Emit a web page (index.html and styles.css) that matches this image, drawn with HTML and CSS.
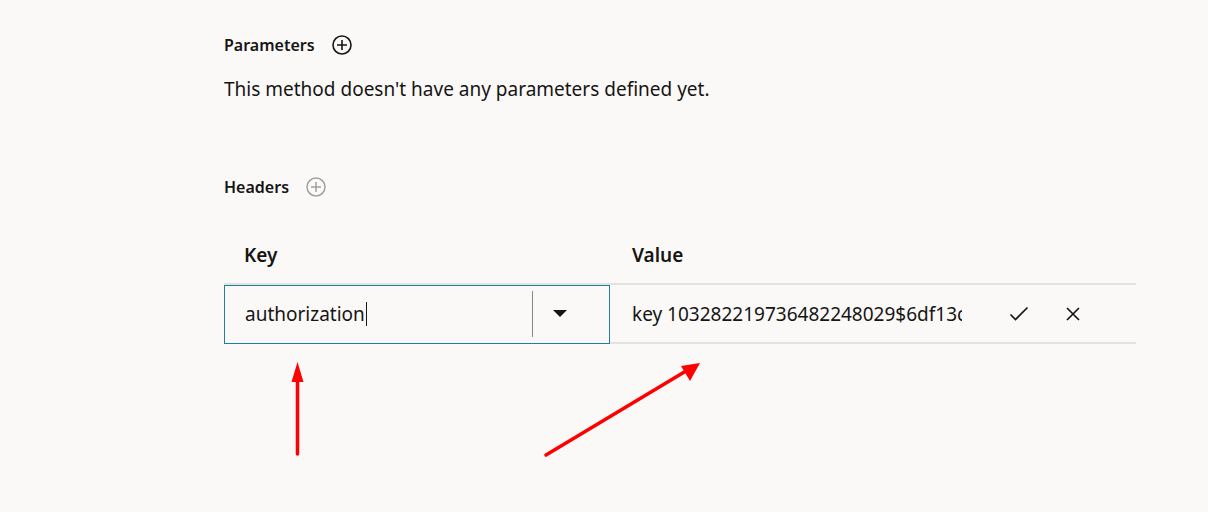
FILE: index.html
```html
<!DOCTYPE html>
<html lang="en">
<head>
<meta charset="utf-8">
<link rel="stylesheet" href="styles.css">
<title>Method</title>
</head>
<body>
<main class="page">
  <section class="group params">
    <div class="group-title">
      <span>Parameters</span>
      <svg class="add-icon" viewBox="0 0 20 20" width="20" height="20"><circle cx="10" cy="10" r="9" fill="none" stroke="#161513" stroke-width="1.6"/><path d="M10 5v10M5 10h10" stroke="#161513" stroke-width="1.6"/></svg>
    </div>
    <p class="desc">This method doesn't have any parameters defined yet.</p>
  </section>

  <section class="group headers">
    <div class="group-title">
      <span>Headers</span>
      <svg class="add-icon" viewBox="0 0 20 20" width="20" height="20"><circle cx="10" cy="10" r="9" fill="none" stroke="#a3a09c" stroke-width="1.5"/><path d="M10 5v10M5 10h10" stroke="#a3a09c" stroke-width="1.5"/></svg>
    </div>

    <div class="table">
      <div class="th th-key">Key</div>
      <div class="th th-value">Value</div>
      <div class="td td-key">
        <div class="combo">
          <span class="combo-text">authorization<span class="caret"></span></span>
          <span class="combo-sep"></span>
          <span class="combo-btn"><svg viewBox="0 0 14 8" width="14" height="8"><path d="M0 0h14L7 7z" fill="#161513"/></svg></span>
        </div>
      </div>
      <div class="td td-value">
        <span class="value-text">key 103282219736482248029$6df13c5e</span>
        <div class="actions">
          <svg viewBox="0 0 20 16" width="20" height="16"><path d="M1.5 8.5l5 5L18.5 1.5" fill="none" stroke="#161513" stroke-width="1.7"/></svg>
          <svg viewBox="0 0 14 14" width="14" height="14"><path d="M1 1l12 12M13 1L1 13" fill="none" stroke="#161513" stroke-width="1.7"/></svg>
        </div>
      </div>
    </div>
  </section>

  <svg class="annot" width="1208" height="512" viewBox="0 0 1208 512">
    <line x1="297.5" y1="454" x2="297.5" y2="378" stroke="#ff0000" stroke-width="3.5" stroke-linecap="round"/>
    <path d="M297.5 362L291.5 382H303.5Z" fill="#ff0000"/>
    <line x1="546" y1="455" x2="686" y2="371" stroke="#ff0000" stroke-width="3.5" stroke-linecap="round"/>
    <path d="M700 363L681 366L690 381Z" fill="#ff0000"/>
  </svg>
</main>
</body>
</html>
```

FILE: styles.css
```css
* { box-sizing: border-box; }
html, body { margin: 0; padding: 0; }
body {
  background: #faf9f8;
  color: #161513;
  font-family: "Noto Sans", "Open Sans", "Liberation Sans", sans-serif;
  width: 1208px;
  height: 512px;
  overflow: hidden;
}
.page {
  position: relative;
  padding: 34px 72px 0 224px;
  height: 512px;
}
.group-title {
  display: flex;
  align-items: center;
  gap: 17px;
  height: 22px;
  font-size: 16px;
  font-weight: 600;
}
.add-icon { display: block; }
.desc {
  margin: 22px 0 0;
  font-size: 19px;
  line-height: 22px;
}
.headers { margin-top: 76px; }
.table {
  margin-top: 33px;
  width: 912px;
  display: grid;
  grid-template-columns: 386px 526px;
}
.th {
  height: 54px;
  display: flex;
  align-items: center;
  padding-bottom: 4px;
  font-size: 19px;
  font-weight: 600;
  border-bottom: 2px solid #e4e2df;
}
.th-key { padding-left: 20px; }
.th-value { padding-left: 22px; }
.td {
  height: 59px;
  border-bottom: 2px solid #e4e2df;
  display: flex;
  align-items: center;
  font-size: 19px;
}
.td-key { border-bottom: none; }
.combo {
  width: 386px;
  height: 59px;
  margin-top: -1px;
  border: 1px solid #227e9e;
  display: flex;
  align-items: center;
}
.combo-text {
  flex: 1;
  padding-left: 20px;
  display: flex;
  align-items: center;
}
.caret {
  display: inline-block;
  width: 1px;
  height: 24px;
  background: #161513;
  margin-left: 1px;
}
.combo-sep {
  width: 1px;
  height: 46px;
  background: #8a8785;
}
.combo-btn {
  width: 76px;
  display: flex;
  padding-left: 20px;
  padding-bottom: 1px;
}
.combo-btn svg { display: block; }
.td-value { padding-left: 22px; }
.value-text {
  width: 330px;
  overflow: hidden;
  white-space: nowrap;
}
.actions {
  display: flex;
  align-items: center;
  gap: 37px;
  margin-left: 47px;
}
.actions svg { display: block; }
.annot {
  position: absolute;
  left: 0;
  top: 0;
  pointer-events: none;
}
```
